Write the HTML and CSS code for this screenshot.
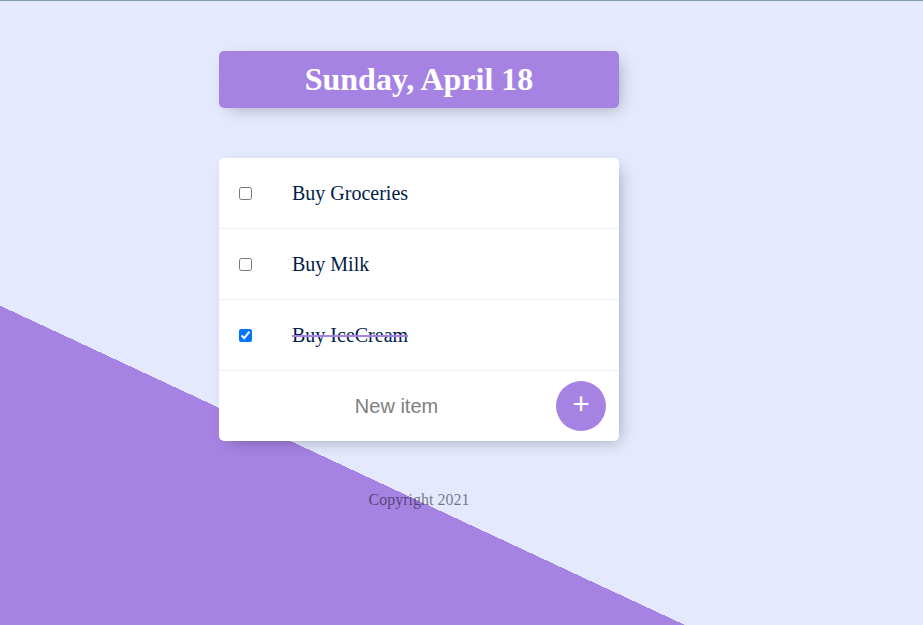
FILE: index.html
```html
<!DOCTYPE html>
<html>
<head>
<meta charset="utf-8">
<title>To Do List</title>
<link rel="stylesheet" href="styles.css">
</head>
<body>
<div class="page">
  <div class="box heading">
    <h1 class="title">Sunday, April 18</h1>
  </div>
  <div class="box list">
    <div class="item">
      <input class="check" type="checkbox">
      <p class="text">Buy Groceries</p>
    </div>
    <div class="item">
      <input class="check" type="checkbox">
      <p class="text">Buy Milk</p>
    </div>
    <div class="item">
      <input class="check" type="checkbox" checked>
      <p class="text">Buy IceCream</p>
    </div>
    <form class="item add-form">
      <input class="new-item" type="text" name="newItem" placeholder="New item" autocomplete="off">
      <button class="add" type="button">+</button>
    </form>
  </div>
  <footer class="footer">Copyright 2021</footer>
</div>
</body>
</html>
```

FILE: styles.css
```css
html {
  margin: 0;
  border-top: 1px solid #7f9ea6;
  background-color: #E4E9FD;
  background-image: linear-gradient(25deg, #A683E3 50%, #E4E9FD 50%);
  background-size: 838px 1000px;
  background-repeat: no-repeat;
  min-height: 700px;
}

body {
  margin: 0;
  font-family: "Liberation Serif", "Times New Roman", serif;
}

.page {
  width: 838px;
  padding-top: 50px;
}

.box {
  width: 400px;
  margin: 0 auto 50px;
  background: #fff;
  border-radius: 5px;
  box-shadow: 5px 5px 15px -5px rgba(0, 0, 0, 0.3);
}

.heading {
  background-color: #A683E3;
  text-align: center;
}

.title {
  margin: 0;
  padding: 10px;
  color: #fff;
  font-size: 32px;
  font-weight: bold;
  line-height: 37px;
}

.item {
  min-height: 70px;
  display: flex;
  align-items: center;
  border-bottom: 1px solid #F1F1F1;
}

.item:last-child {
  border-bottom: 0;
}

.check {
  margin: 20px;
  width: 13px;
  height: 13px;
  flex: none;
}

.text {
  margin: 0;
  padding: 20px;
  font-size: 20px;
  color: #00204a;
}

.check:checked + .text {
  text-decoration: line-through;
  text-decoration-color: #A683E3;
  text-decoration-thickness: 2px;
}

.add-form {
  margin: 0;
  padding-left: 20px;
  gap: 2px;
}

.new-item {
  width: 315px;
  height: 60px;
  padding: 0;
  border: none;
  text-align: center;
  font-family: "Liberation Sans", Arial, sans-serif;
  font-size: 20px;
  color: #333;
  background: transparent;
}

.new-item::placeholder {
  color: grey;
  opacity: 1;
}

.new-item:focus {
  outline: none;
}

.add {
  width: 50px;
  height: 50px;
  border-radius: 50%;
  border: 0;
  padding: 0 0 5px;
  background-color: #A683E3;
  color: #fff;
  font-family: "Liberation Sans", Arial, sans-serif;
  font-size: 30px;
  line-height: 30px;
  flex: none;
}

.footer {
  text-align: center;
  color: rgba(0, 0, 0, 0.5);
  font-size: 16px;
}
```
